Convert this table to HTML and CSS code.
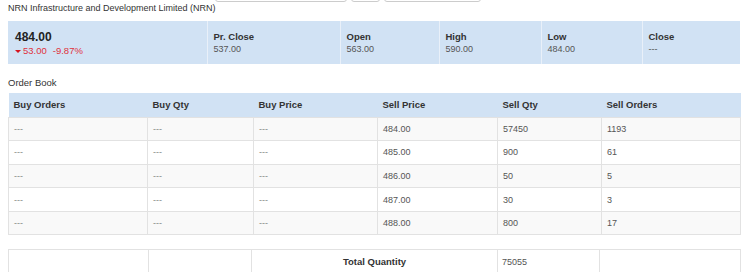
FILE: index.html
```html
<!DOCTYPE html>
<html>
<head>
<meta charset="utf-8">
<link rel="stylesheet" href="styles.css">
</head>
<body>
<div class="page">
  <div class="title-row">
    <h1 class="title">NRN Infrastructure and Development Limited (NRN)</h1>
    <div class="filters">
      <span class="field field-a"></span>
      <span class="field field-b"></span>
      <span class="field field-c"></span>
    </div>
  </div>

  <table class="summary">
    <colgroup>
      <col class="c-price"><col class="c-prc"><col class="c-open"><col class="c-high"><col class="c-low"><col class="c-close">
    </colgroup>
    <tr>
      <td class="price-cell">
        <div class="ltp">484.00</div>
        <div class="change"><span class="caret"></span>53.00<span class="pct">-9.87%</span></div>
      </td>
      <td><div class="lbl">Pr. Close</div><div class="val">537.00</div></td>
      <td><div class="lbl">Open</div><div class="val">563.00</div></td>
      <td><div class="lbl">High</div><div class="val">590.00</div></td>
      <td><div class="lbl">Low</div><div class="val">484.00</div></td>
      <td><div class="lbl">Close</div><div class="val">---</div></td>
    </tr>
  </table>

  <div class="section-label">Order Book</div>

  <table class="book">
    <colgroup>
      <col class="b1"><col class="b2"><col class="b3"><col class="b4"><col class="b5"><col class="b6">
    </colgroup>
    <thead>
      <tr><th>Buy Orders</th><th>Buy Qty</th><th>Buy Price</th><th>Sell Price</th><th>Sell Qty</th><th>Sell Orders</th></tr>
    </thead>
    <tbody>
      <tr><td class="nil">---</td><td class="nil">---</td><td class="nil">---</td><td>484.00</td><td>57450</td><td>1193</td></tr>
      <tr><td class="nil">---</td><td class="nil">---</td><td class="nil">---</td><td>485.00</td><td>900</td><td>61</td></tr>
      <tr><td class="nil">---</td><td class="nil">---</td><td class="nil">---</td><td>486.00</td><td>50</td><td>5</td></tr>
      <tr><td class="nil">---</td><td class="nil">---</td><td class="nil">---</td><td>487.00</td><td>30</td><td>3</td></tr>
      <tr><td class="nil">---</td><td class="nil">---</td><td class="nil">---</td><td>488.00</td><td>800</td><td>17</td></tr>
    </tbody>
  </table>

  <table class="total">
    <colgroup>
      <col class="t1"><col class="t2"><col class="t3"><col class="t4"><col class="t5">
    </colgroup>
    <tr><td></td><td></td><td class="total-label">Total Quantity</td><td>75055</td><td></td></tr>
  </table>
</div>
</body>
</html>
```

FILE: styles.css
```css
html, body {
  margin: 0;
  padding: 0;
  background: #fff;
}
body {
  font-family: "Liberation Sans", Arial, sans-serif;
  color: #333;
  font-size: 9px;
}
.page {
  padding: 0 8px;
  width: 732px;
}
.title-row {
  display: flex;
  align-items: flex-start;
  height: 21px;
}
.title {
  margin: 0;
  width: 207px;
  font-size: 9px;
  font-weight: normal;
  line-height: 17px;
  color: #333;
  white-space: nowrap;
}
.filters {
  display: flex;
  gap: 4px;
  margin-top: -26px;
}
.field {
  display: block;
  height: 26px;
  border: 1px solid #ccc;
  border-radius: 3px;
  background: #fff;
}
.field-a { width: 130px; }
.field-b { width: 27px; }
.field-c { width: 95px; }

.summary {
  width: 732px;
  border-collapse: collapse;
  table-layout: fixed;
  background: #d1e2f4;
}
.c-price { width: 199px; }
.c-prc { width: 133px; }
.c-open { width: 99px; }
.c-high { width: 102px; }
.c-low { width: 101px; }
.c-close { width: 98px; }
.summary td {
  height: 43px;
  box-sizing: border-box;
  vertical-align: top;
  padding: 10px 6px 0;
  border-left: 1px solid #e9f0f9;
}
.summary td:first-child { border-left: none; padding-left: 7px; padding-top: 9px; }
.lbl {
  font-weight: bold;
  font-size: 9.5px;
  line-height: 12px;
  color: #333;
}
.val {
  font-size: 9px;
  line-height: 12px;
  color: #555;
}
.ltp {
  font-weight: bold;
  font-size: 12px;
  line-height: 14px;
  color: #222;
}
.change {
  display: flex;
  align-items: center;
  font-size: 9.5px;
  line-height: 14px;
  color: #e0313b;
}
.caret {
  width: 0;
  height: 0;
  border-left: 3px solid transparent;
  border-right: 3px solid transparent;
  border-top: 3px solid #d6141f;
  margin-right: 2px;
}
.pct { margin-left: 6px; }

.section-label {
  margin-top: 12px;
  font-size: 9.5px;
  line-height: 14px;
  color: #333;
  margin-bottom: 3px;
}

.book, .total {
  width: 732px;
  border-collapse: collapse;
  table-layout: fixed;
}
.b1 { width: 139px; }
.b2 { width: 106px; }
.b3 { width: 124px; }
.b4 { width: 120px; }
.b5 { width: 104px; }
.b6 { width: 139px; }
.book th {
  background: #d1e2f4;
  height: 24px;
  box-sizing: border-box;
  text-align: left;
  font-weight: bold;
  font-size: 9.5px;
  color: #333;
  padding: 0 5px;
}
.book td {
  height: 23.6px;
  box-sizing: border-box;
  padding: 0 5px;
  border: 1px solid #e2e2e2;
  font-size: 9px;
  color: #555;
}
.book tbody tr:nth-child(odd) td { background: #f9f9f9; }
.book td.nil { color: #888; }

.total {
  margin-top: 14px;
}
.t1 { width: 140px; }
.t2 { width: 103px; }
.t3 { width: 246px; }
.t4 { width: 102px; }
.t5 { width: 141px; }
.total td {
  height: 24px;
  box-sizing: border-box;
  padding: 0 4px;
  border: 1px solid #e2e2e2;
  font-size: 9px;
  color: #555;
}
.total td.total-label {
  text-align: center;
  font-weight: bold;
  font-size: 9.5px;
  color: #333;
}
```
